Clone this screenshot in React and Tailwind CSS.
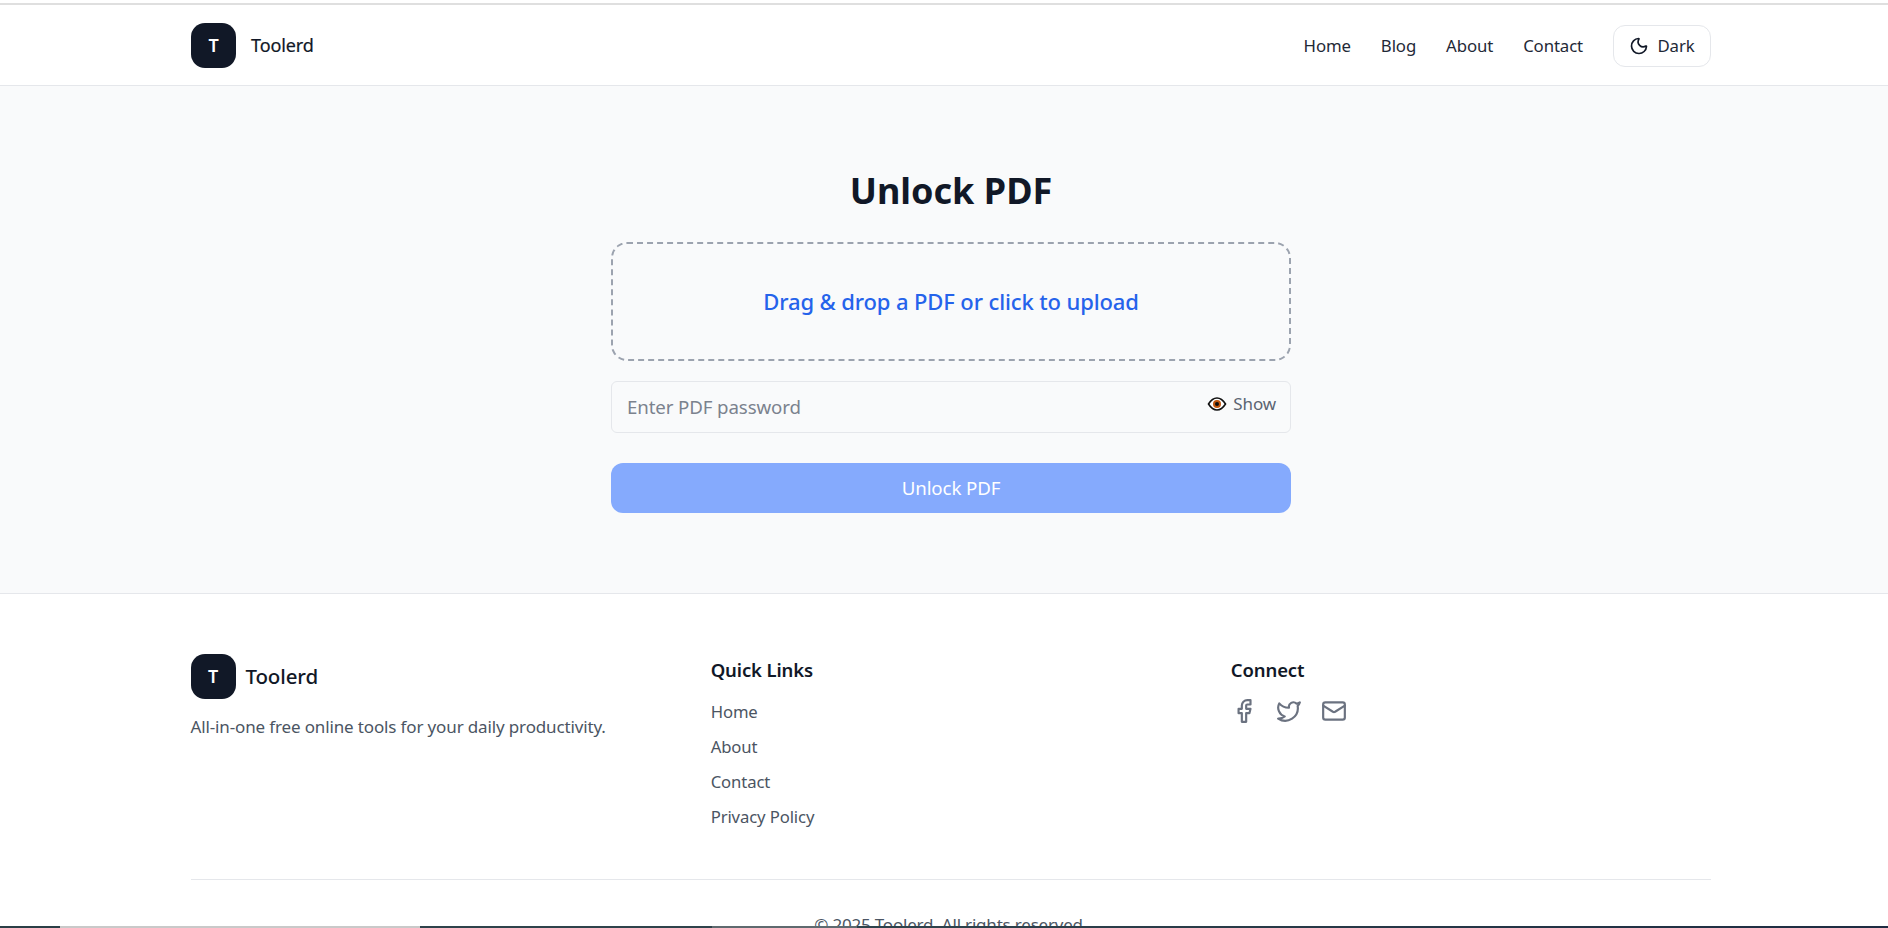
import React from 'react';
import { Moon, Facebook, Twitter, Mail } from 'lucide-react';

const font = 'font-["Noto_Sans","Open_Sans",sans-serif]';

const Logo = () => (
  <div className="w-[45px] h-[45px] rounded-[14px] bg-[#111827] flex items-center justify-center text-white font-semibold text-[18px]">
    T
  </div>
);

const EyeIcon = () => (
  <svg width="20" height="14" viewBox="0 0 19 14" className="shrink-0">
    <path d="M1 7C3.5 3 6.2 1 9.5 1S15.5 3 18 7c-2.500 4-5.200 6-8.500 6S3.500 11 1 7Z" fill="#fff" stroke="#111" strokeWidth="1.600" />
    <circle cx="9.500" cy="7" r="4" fill="#c2570f" />
    <circle cx="9.500" cy="7" r="2" fill="#111" />
  </svg>
);

const navLinks = ['Home', 'Blog', 'About', 'Contact'];
const footerLinks = ['Home', 'About', 'Contact', 'Privacy Policy'];

export default function App() {
  return (
    <div className={`${font} h-[928px] overflow-hidden bg-white relative tracking-[-0.12px]`}>
      <div className="h-[3px] bg-white" />
      <div className="h-[2px] bg-[#dfdfdf]" />

      {/* Header */}
      <header className="h-[81px] pt-px border-b border-[#e5e7eb] bg-white pl-[191px] pr-[177px] flex items-center justify-between">
        <div className="flex items-center gap-[15px]">
          <Logo />
          <span className="text-[18px] text-[#111827] [-webkit-text-stroke:0.2px_#111827]">Toolerd</span>
        </div>
        <nav className="flex items-center gap-[30px] text-[16.800px] text-[#1f2937]">
          {navLinks.map((link) => (
            <a key={link} className="mt-px">{link}</a>
          ))}
          <button className="h-[42px] w-[98px] rounded-[12px] border border-[#e5e7eb] flex items-center justify-center gap-2">
            <Moon size={20} className="text-[#111827]" />
            <span className="mt-px">Dark</span>
          </button>
        </nav>
      </header>

      {/* Main */}
      <main className="h-[508px] bg-[#f9fafb] border-b border-[#e5e7eb] flex flex-col items-center pl-[14px] pt-[85px]">
        <h1 className="text-[36px] leading-[40px] font-bold text-[#111827] tracking-normal">Unlock PDF</h1>
        <div className="mt-[31px] w-[680px] h-[119px] rounded-[16px] border-2 border-dashed border-[#9ca3af] flex items-center justify-center text-[22px] font-medium text-[#2563eb]">
          Drag &amp; drop a PDF or click to upload
        </div>
        <div className="mt-[20px] w-[680px] h-[52px] rounded-[6px] border border-[#e5e7eb] flex items-center justify-between pl-[15px] pr-[14px]">
          <span className="text-[18.700px] text-[#7b828e]">Enter PDF password</span>
          <span className="flex items-center gap-[6px] text-[17px] text-[#5b6472] -mt-[6px]">
            <EyeIcon />
            Show
          </span>
        </div>
        <button className="mt-[30px] w-[680px] h-[50px] rounded-[12px] bg-[#85aafd] text-white text-[18.700px]">
          Unlock PDF
        </button>
      </main>

      {/* Footer */}
      <footer className="pl-[190.500px] pr-[177px] pt-[60px]">
        <div className="grid grid-cols-3 gap-10 h-[226px] border-b border-[#e5e7eb]">
          <div>
            <div className="flex items-center gap-[10px]">
              <Logo />
              <span className="text-[20.500px] font-medium text-[#111827]">Toolerd</span>
            </div>
            <p className="mt-[16px] text-[17px] leading-[24px] tracking-[-0.14px] text-[#4b5563]">
              All-in-one free online tools for your daily productivity.
            </p>
          </div>
          <div>
            <h3 className="mt-[2px] text-[18.500px] leading-[27px] font-semibold text-[#111827]">Quick Links</h3>
            <ul className="mt-[17px] flex flex-col gap-[11px] text-[16.700px] leading-[24px] text-[#4b5563]">
              {footerLinks.map((link) => (
                <li key={link}>{link}</li>
              ))}
            </ul>
          </div>
          <div>
            <h3 className="mt-[2px] text-[18.500px] leading-[27px] font-semibold text-[#111827]">Connect</h3>
            <div className="mt-[15px] flex items-center gap-[19px] text-[#6b7280]">
              <Facebook size={26} />
              <Twitter size={26} />
              <Mail size={26} />
            </div>
          </div>
        </div>
        <p className="mt-[32px] text-center text-[17px] tracking-[-0.2px] text-[#4b5563]">
          © 2025 Toolerd. All rights reserved.
        </p>
      </footer>

      {/* taskbar edge */}
      <div className="absolute bottom-0 left-0 right-0 h-[2px] flex">
        <div className="w-[60px] bg-[#2b3f46]" />
        <div className="w-[360px] bg-[#c9c9c9]" />
        <div className="w-[292px] bg-[#2f434b]" />
        <div className="w-[145px] bg-[#5f6a6f]" />
        <div className="flex-1 bg-gradient-to-r from-[#2f434b] to-[#1e2c42]" />
      </div>
    </div>
  );
}
